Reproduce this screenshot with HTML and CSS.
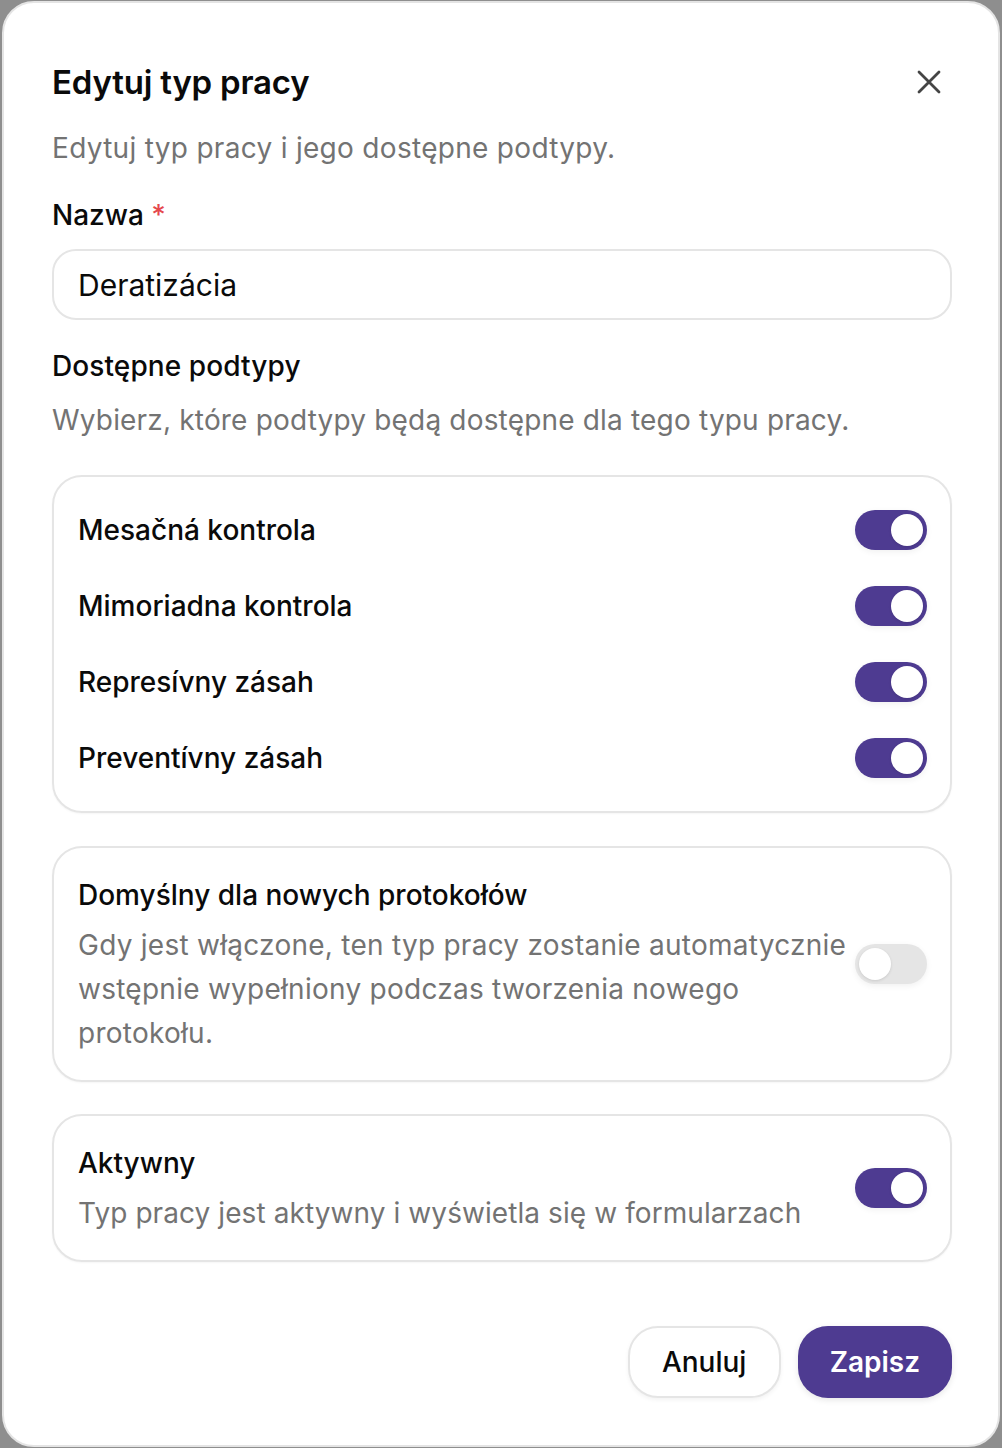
FILE: index.html
```html
<!DOCTYPE html>
<html lang="pl">
<head>
<meta charset="utf-8">
<title>Edytuj typ pracy</title>
<link rel="stylesheet" href="styles.css">
</head>
<body>
<div class="modal">
  <div class="header">
    <h1 class="title">Edytuj typ pracy</h1>
    <button class="close" aria-label="Zamknij">
      <svg width="26" height="26" viewBox="0 0 26 26" fill="none" stroke="currentColor" stroke-width="2.8" stroke-linecap="round"><path d="M3 3L23 23M23 3L3 23"/></svg>
    </button>
  </div>
  <p class="subtitle">Edytuj typ pracy i jego dostępne podtypy.</p>

  <label class="label">Nazwa <span class="req">*</span></label>
  <div class="input">Deratizácia</div>

  <h2 class="section">Dostępne podtypy</h2>
  <p class="section-desc">Wybierz, które podtypy będą dostępne dla tego typu pracy.</p>

  <div class="card list">
    <div class="row"><span class="row-label">Mesačná kontrola</span><span class="toggle on"><span class="knob"></span></span></div>
    <div class="row"><span class="row-label">Mimoriadna kontrola</span><span class="toggle on"><span class="knob"></span></span></div>
    <div class="row"><span class="row-label">Represívny zásah</span><span class="toggle on"><span class="knob"></span></span></div>
    <div class="row"><span class="row-label">Preventívny zásah</span><span class="toggle on"><span class="knob"></span></span></div>
  </div>

  <div class="card setting">
    <div class="setting-text">
      <div class="setting-title">Domyślny dla nowych protokołów</div>
      <div class="setting-desc">Gdy jest włączone, ten typ pracy zostanie automatycznie wstępnie wypełniony podczas tworzenia nowego protokołu.</div>
    </div>
    <span class="toggle off"><span class="knob"></span></span>
  </div>

  <div class="card setting">
    <div class="setting-text">
      <div class="setting-title">Aktywny</div>
      <div class="setting-desc setting-desc-tight">Typ pracy jest aktywny i wyświetla się w formularzach</div>
    </div>
    <span class="toggle on"><span class="knob"></span></span>
  </div>

  <div class="footer">
    <button class="btn btn-outline">Anuluj</button>
    <button class="btn btn-primary">Zapisz</button>
  </div>
</div>
</body>
</html>
```

FILE: styles.css
```css
* { box-sizing: border-box; }
html, body { margin: 0; padding: 0; }
body {
  background: #8e8e8e;
  font-family: "Inter", "Noto Sans", sans-serif;
  color: #0a0a0a;
  width: 1002px;
  height: 1448px;
  overflow: hidden;
}
.modal {
  margin: 1px 2px;
  height: 1446px;
  background: #ffffff;
  border: 2px solid #e4e4e4;
  border-radius: 32px;
  padding: 0 46px 0 48px;
  display: flex;
  flex-direction: column;
}
.header {
  display: flex;
  align-items: center;
  justify-content: space-between;
  margin-top: 57px;
}
.title {
  margin: 0;
  font-size: 33px;
  line-height: 44px;
  font-weight: 600;
  letter-spacing: -0.2px;
}
.close {
  border: 0;
  background: none;
  padding: 0;
  color: #454545;
  width: 26px;
  height: 26px;
  margin-right: 10px;
  display: flex;
}
.subtitle {
  margin: 22px 0 0;
  font-size: 28px;
  line-height: 44px;
  color: #737373;
  letter-spacing: 0.3px;
}
.label {
  display: block;
  margin-top: 23px;
  font-size: 28px;
  line-height: 44px;
  font-weight: 500;
}
.req { color: #e5484d; }
.input {
  margin-top: 12px;
  height: 71px;
  border: 2px solid #e5e5e5;
  border-radius: 24px;
  padding: 0 24px;
  display: flex;
  align-items: center;
  font-size: 30px;
  color: #0a0a0a;
}
.section {
  margin: 24px 0 0;
  font-size: 28px;
  line-height: 44px;
  font-weight: 500;
  letter-spacing: 0.1px;
}
.section-desc {
  margin: 10px 0 0;
  font-size: 28px;
  line-height: 44px;
  color: #737373;
  letter-spacing: 0.18px;
}
.card {
  border: 2px solid #e5e5e5;
  border-radius: 30px;
  box-shadow: 0 1px 2px rgba(0,0,0,0.04);
}
.list {
  margin-top: 33px;
  padding: 33px 23px 33px 24px;
  display: flex;
  flex-direction: column;
  gap: 36px;
}
.row {
  display: flex;
  align-items: center;
  justify-content: space-between;
  height: 40px;
}
.row-label {
  font-size: 28px;
  font-weight: 500;
}
.setting {
  margin-top: 33px;
  padding: 25px 23px 25px 24px;
  display: flex;
  align-items: center;
  gap: 5px;
}
.setting + .setting { margin-top: 32px; }
.setting-text { flex: 1; min-width: 0; }
.setting-title {
  font-size: 28px;
  line-height: 44px;
  font-weight: 500;
}
.setting-desc {
  margin-top: 6px;
  font-size: 28px;
  line-height: 44px;
  color: #737373;
  letter-spacing: 0.26px;
}
.setting-desc-tight { letter-spacing: 0.08px; }
.toggle {
  flex: none;
  width: 72px;
  height: 40px;
  border-radius: 20px;
  padding: 4px;
  display: flex;
  box-shadow: 0 2px 6px rgba(0,0,0,0.06);
}
.toggle.on { background: #4e3b91; justify-content: flex-end; }
.toggle.off { background: #e5e5e5; justify-content: flex-start; }
.knob {
  width: 32px;
  height: 32px;
  border-radius: 50%;
  background: #ffffff;
  box-shadow: 0 1px 3px rgba(0,0,0,0.12);
}
.footer {
  margin-top: 64px;
  display: flex;
  justify-content: flex-end;
  gap: 17px;
}
.btn {
  height: 72px;
  min-width: 153px;
  padding: 0 32px;
  border-radius: 30px;
  font-family: inherit;
  font-size: 28px;
  font-weight: 500;
  cursor: pointer;
}
.btn-outline {
  background: #ffffff;
  border: 2px solid #e5e5e5;
  color: #0a0a0a;
  box-shadow: 0 2px 4px rgba(0,0,0,0.05);
}
.btn-primary {
  background: #4e3b91;
  border: 0;
  color: #ffffff;
  font-weight: 600;
  box-shadow: 0 2px 6px rgba(0,0,0,0.1);
}
```
